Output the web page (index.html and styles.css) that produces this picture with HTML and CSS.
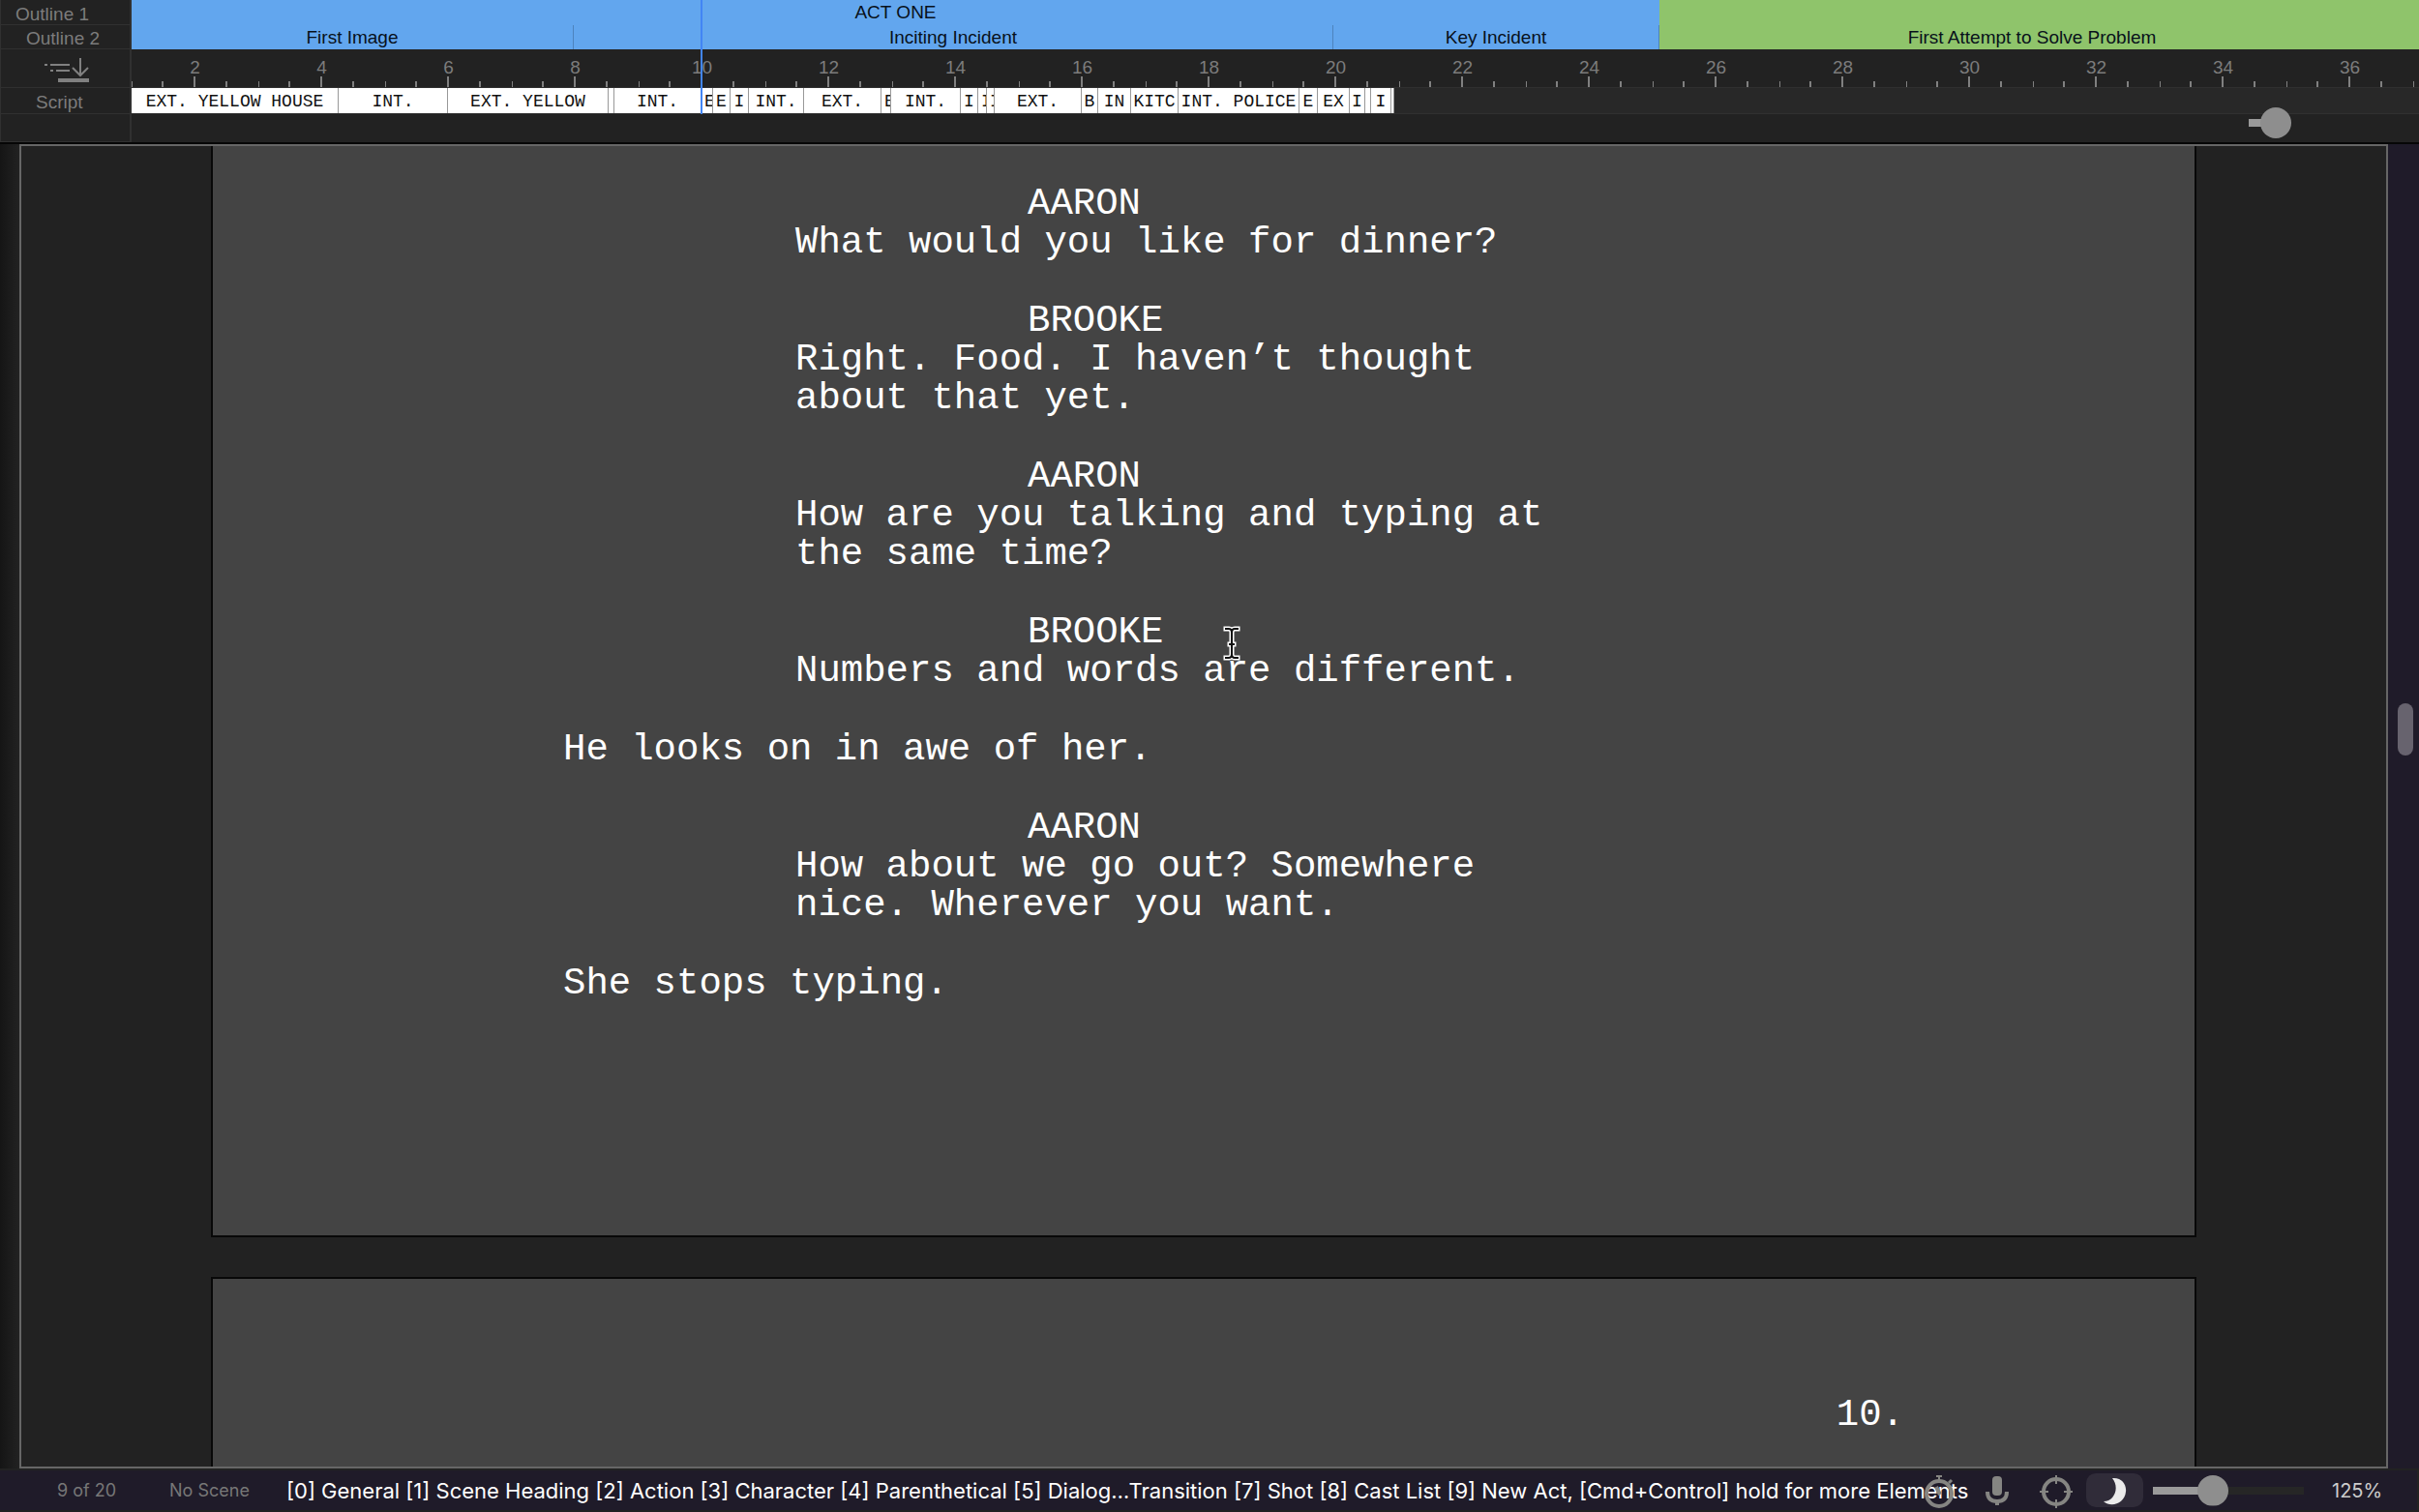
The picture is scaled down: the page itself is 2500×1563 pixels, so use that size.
FILE: index.html
```html
<!DOCTYPE html>
<html lang="en">
<head>
<meta charset="utf-8">
<title>Screenplay</title>
<link rel="stylesheet" href="styles.css">
</head>
<body>
<div class="app">
  <header class="timeline">
    <div class="label label-outline-1">Outline 1</div>
    <div class="track acts">
      <div class="act blue" style="width:1579px">ACT ONE</div>
      <div class="act green"></div>
    </div>
    <div class="label label-outline-2">Outline 2</div>
    <div class="track beats">
      <div class="beat blue" style="width:457px">First Image</div>
      <div class="beat blue" style="width:785px">Inciting Incident</div>
      <div class="beat blue" style="width:337px">Key Incident</div>
      <div class="beat green">First Attempt to Solve Problem</div>
    </div>
    <div class="label label-tools">
      <button class="icon-button" aria-label="Insert outline">
        <svg width="46" height="28" viewBox="0 0 46 28" fill="none" stroke="#808080">
          <path d="M0 8h3M6 8h20M6 14h3M12 14h14" stroke-width="2"/>
          <path d="M37 1v18M29 11l8 8 8-8" stroke-width="2"/>
          <path d="M14 24h32" stroke-width="4"/>
        </svg>
      </button>
    </div>
    <ol class="track ruler">
      <li>2</li><li>4</li><li>6</li><li>8</li><li>10</li><li>12</li><li>14</li><li>16</li><li>18</li><li>20</li>
      <li>22</li><li>24</li><li>26</li><li>28</li><li>30</li><li>32</li><li>34</li><li>36</li><li></li>
    </ol>
    <div class="label label-script">Script</div>
    <div class="track scenes">
      <span style="width:214px">EXT. YELLOW HOUSE</span>
      <span style="width:113px">INT.</span>
      <span style="width:166px">EXT. YELLOW</span>
      <span style="width:6px"></span>
      <span style="width:90px">INT.</span>
      <span class="cut" style="width:12px">E</span>
      <span style="width:18px">E</span>
      <span style="width:19px">I</span>
      <span style="width:57px">INT.</span>
      <span style="width:80px">EXT.</span>
      <span class="cut" style="width:10px">E</span>
      <span style="width:72px">INT.</span>
      <span style="width:18px">I</span>
      <span class="cut" style="width:9px">I</span>
      <span class="cut" style="width:8px">I</span>
      <span style="width:90px">EXT.</span>
      <span style="width:17px">B</span>
      <span style="width:34px">IN</span>
      <span style="width:49px">KITC</span>
      <span style="width:125px">INT. POLICE</span>
      <span style="width:19px">E</span>
      <span style="width:33px">EX</span>
      <span style="width:16px">I</span>
      <span style="width:6px"></span>
      <span style="width:21px">I</span>
      <span style="width:3px"></span>
    </div>
    <div class="label"></div>
    <div class="zoom-row">
      <input class="slider timeline-zoom" type="range" min="0" max="100" value="10" aria-label="Timeline zoom">
    </div>
    <div class="playhead"></div>
  </header>

  <main class="workspace">
    <div class="viewport">
      <article class="page page-current">
        <section class="speech"><h2>AARON</h2><p>What would you like for dinner?</p></section>
        <section class="speech"><h2>BROOKE</h2><p>Right. Food. I haven’t thought<br>about that yet.</p></section>
        <section class="speech"><h2>AARON</h2><p>How are you talking and typing at<br>the same time?</p></section>
        <section class="speech"><h2>BROOKE</h2><p>Numbers and words are different.</p></section>
        <p class="action">He looks on in awe of her.</p>
        <section class="speech"><h2>AARON</h2><p>How about we go out? Somewhere<br>nice. Wherever you want.</p></section>
        <p class="action">She stops typing.</p>
        <svg class="pointer" width="18" height="36" viewBox="0 0 18 36" fill="none" stroke-linecap="square">
          <path d="M3 3h3q3 0 3 4q0-4 3-4h3M9 7v22M3 33h3q3 0 3-4q0 4 3 4h3M7 19h4" stroke="#fff" stroke-width="5"/>
          <path d="M3 3h3q3 0 3 4q0-4 3-4h3M9 7v22M3 33h3q3 0 3-4q0 4 3 4h3M7 19h4" stroke="#111" stroke-width="2"/>
        </svg>
      </article>
      <article class="page page-next"><p class="page-number">10.</p></article>
    </div>
    <div class="scrollbar"><div class="scroll-thumb"></div></div>
  </main>

  <footer class="status">
    <span class="status-page">9 of 20</span>
    <span class="status-scene">No Scene</span>
    <p class="shortcuts">[0] General [1] Scene Heading [2] Action [3] Character [4] Parenthetical [5] Dialog…Transition [7] Shot [8] Cast List [9] New Act, [Cmd+Control] hold for more Elements</p>
    <div class="tools">
      <button class="icon-button" aria-label="Timer">
        <svg width="32" height="36" viewBox="0 0 32 36" fill="none" stroke="#858582">
          <circle cx="16" cy="21" r="13" stroke-width="4"/>
          <path d="M16 4v4M13 3h6" stroke-width="2"/>
          <path d="M26 10l3-3" stroke-width="3"/>
          <path d="M13 14l4 8" stroke-width="4"/>
        </svg>
      </button>
      <button class="icon-button" aria-label="Dictation">
        <svg width="24" height="36" viewBox="0 0 24 36" fill="none" stroke="#858582">
          <rect x="7" y="3" width="10" height="20" rx="4" fill="#858582" stroke="none"/>
          <path d="M2 19q0 10 10 10t10-10" stroke-width="4"/>
          <path d="M12 29v4" stroke-width="4"/>
        </svg>
      </button>
      <button class="icon-button" aria-label="Focus mode">
        <svg width="34" height="36" viewBox="0 0 34 36" fill="none" stroke="#858582">
          <circle cx="17" cy="19" r="13" stroke-width="4"/>
          <path d="M17 2v9M17 27v9M0 19h9M25 19h9" stroke-width="2"/>
        </svg>
      </button>
      <button class="icon-button night" aria-label="Night mode">
        <svg width="24" height="30" viewBox="0 0 24 30">
          <path d="M9 2C19 1 24 9 23 16C22 28 8 33 0 26C11 26 17 12 9 2Z" fill="#ebebeb"/>
        </svg>
      </button>
    </div>
    <input class="slider page-zoom" type="range" min="0" max="100" value="37" aria-label="Page zoom">
    <output class="zoom-value">125%</output>
  </footer>
</div>
</body>
</html>
```
FILE: styles.css
```css
* { box-sizing: border-box; }

body {
  margin: 0;
  background: #222;
  font-family: "Liberation Sans", Arial, sans-serif;
}

.app {
  display: flex;
  flex-direction: column;
  height: 100vh;
  overflow: hidden;
}

h2, p, ol {
  margin: 0;
  padding: 0;
  font-size: inherit;
  font-weight: inherit;
}

.icon-button {
  display: flex;
  align-items: center;
  justify-content: center;
  padding: 0;
  border: 0;
  background: none;
}

/* Timeline */
.timeline {
  position: relative;
  display: grid;
  grid-template-columns: 136px minmax(0, 1fr);
  grid-template-rows: 26px 25px 40px 27px 29px;
  border-bottom: 2px solid #060606;
  font-size: 19px;
}

.label {
  display: flex;
  align-items: center;
  border: 1px solid #303030;
  border-right-width: 2px;
  border-top: 0;
  padding-top: 4px;
  color: #7c7c7c;
  line-height: 20px;
}

.label-outline-1 { padding-left: 15px; }
.label-outline-2 { padding-left: 26px; }
.label-script { padding-left: 36px; }
.label-tools { padding-left: 45px; }

.track {
  display: flex;
  min-width: 0;
  overflow: hidden;
}

.act, .beat {
  flex: none;
  text-align: center;
  color: #08111b;
  line-height: 26px;
}

.blue { background: #62a6ee; }
.beat.blue { border-right: 1px solid #4d83bd; }
.act.green, .beat.green { flex: 1; background: #8fc46b; }
.beat.green { padding-right: 15px; }

.ruler {
  list-style: none;
  border-bottom: 1px solid #303030;
}

.ruler li {
  flex: none;
  width: 131px;
  height: 39px;
  text-align: center;
  color: #7c7c7c;
  line-height: 38px;
  background:
    linear-gradient(#808080, #808080) 0 33px / 1px 6px no-repeat,
    linear-gradient(#808080, #808080) 31px 33px / 2px 6px no-repeat,
    linear-gradient(#808080, #808080) 64px 28px / 2px 11px no-repeat,
    linear-gradient(#808080, #808080) 97px 33px / 2px 6px no-repeat;
}

.scenes {
  background: #282828;
  border-bottom: 1px solid #303030;
}

.scenes span {
  display: flex;
  flex: none;
  justify-content: center;
  overflow: hidden;
  background: #fff;
  border-right: 1px solid #999;
  color: #111;
  font-family: "Liberation Mono", "Courier New", monospace;
  font-size: 18px;
  line-height: 28px;
  white-space: pre;
}

.scenes .cut {
  justify-content: flex-start;
  padding-left: 3px;
}

.zoom-row {
  display: flex;
  justify-content: flex-end;
  padding-right: 20px;
}

.playhead {
  position: absolute;
  top: 0;
  left: 724px;
  width: 2px;
  height: 118px;
  background: #4285f4;
}

/* Sliders */
.slider {
  --track: #262626;
  --fill: 50%;
  appearance: none;
  width: 156px;
  height: 32px;
  margin: 0;
  background: linear-gradient(to right, #9a9a9a var(--fill), var(--track) var(--fill)) center / 100% 8px no-repeat;
  clip-path: inset(0 round 4px);
}

.slider::-webkit-slider-thumb {
  appearance: none;
  width: 32px;
  height: 32px;
  border-radius: 50%;
  background: #8e8e8e;
}

.timeline-zoom {
  --track: transparent;
  --fill: 18%;
  margin-top: -7px;
}

.page-zoom { --fill: 40%; }

/* Script pages */
.workspace {
  display: flex;
  flex: 1;
  min-height: 0;
  padding-left: 20px;
  background: linear-gradient(to right, #151515, #222 20px);
}

.viewport {
  flex: 1;
  min-width: 0;
  overflow: hidden;
  border: 2px solid #666;
  background: #222;
}

.page {
  position: relative;
  margin: 0 196px;
  border: 2px solid #080808;
  background: #444;
  color: #fff;
  font-family: "Liberation Mono", "Courier New", monospace;
  font-size: 39px;
  line-height: 40px;
}

.page-current {
  display: flex;
  flex-direction: column;
  gap: 41px;
  border-top: 0;
  padding: 40px 0 240px 362px;
}

.speech { padding-left: 240px; }
.speech h2 { padding-left: 240px; }

.page-next {
  margin-top: 41px;
  padding: 121px 300px 160px 0;
  text-align: right;
}

.pointer {
  position: absolute;
  left: 1044px;
  top: 496px;
}

.scrollbar {
  width: 32px;
  padding: 578px 6px 0 10px;
  background: #1f1b29;
}

.scroll-thumb {
  height: 54px;
  border-radius: 8px;
  background: #67636e;
}

/* Status bar */
.status {
  display: flex;
  align-items: center;
  height: 45px;
  padding-left: 59px;
  border: 2px solid #222;
  border-width: 2px 2px 2px 0;
  background: #1f1b29;
  color: #777;
  font-family: Inter, sans-serif;
  font-size: 18px;
  white-space: nowrap;
}

.status-page { width: 116px; }
.status-scene { width: 121px; }

.shortcuts {
  flex: 1;
  min-width: 0;
  color: #fff;
  font-size: 22px;
  font-weight: 400;
}

.tools {
  position: relative;
  display: flex;
  align-items: center;
  gap: 32px;
  margin-right: 10px;
}

.night {
  width: 59px;
  height: 35px;
  margin-left: -18px;
  border-radius: 10px;
  background: #302c39;
}

.zoom-value {
  width: 88px;
  margin-left: 29px;
  color: #ccc;
  font-size: 20px;
}
```
